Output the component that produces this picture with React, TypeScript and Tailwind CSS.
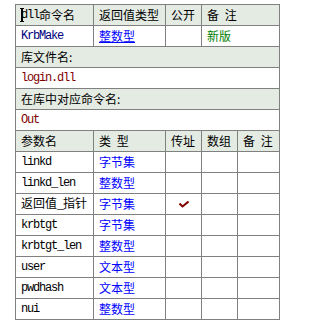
import React from "react";

const mono = "font-['Liberation_Mono',monospace] text-[12px] tracking-[-1.2px]";

type CellProps = {
  children?: React.ReactNode;
  head?: boolean;
  span?: string;
  className?: string;
};

function Cell({ children, head, span = "", className = "" }: CellProps) {
  return (
    <div
      className={`h-[21px] flex items-center pl-[5px] border-r border-b border-[#808080] whitespace-pre overflow-hidden ${
        head ? "bg-[#e4ebe3]" : "bg-white"
      } ${span} ${className}`}
    >
      {children}
    </div>
  );
}

function Check() {
  return (
    <svg width="10" height="7" viewBox="0 0 10 7" className="ml-[8px]">
      <path d="M0.5 2.5 L3.5 5.5 L9.5 0.5" fill="none" stroke="#800000" strokeWidth="2" />
    </svg>
  );
}

type Param = { name: string; type: string; byRef?: boolean };

const params: Param[] = [
  { name: "linkd", type: "字节集" },
  { name: "linkd_len", type: "整数型" },
  { name: "返回值_指针", type: "字节集", byRef: true },
  { name: "krbtgt", type: "字节集" },
  { name: "krbtgt_len", type: "整数型" },
  { name: "user", type: "文本型" },
  { name: "pwdhash", type: "文本型" },
  { name: "nui", type: "整数型" },
];

function isLatin(s: string) {
  return /^[\x00-\x7f]+$/.test(s);
}

export default function App() {
  return (
    <div className="w-[330px] h-[326px] bg-white font-['Noto_Sans_CJK_SC',sans-serif] text-[12px] text-black leading-[14px]">
      <div className="pt-[4px] pl-[15px]">
        <div className="relative w-[265px] grid grid-cols-[78px_72px_36px_36px_42px] border-l border-t border-[#808080]">
          <Cell head>
            <span className={mono}>dll</span>命令名
          </Cell>
          <Cell head>返回值类型</Cell>
          <Cell head>公开</Cell>
          <Cell head span="col-span-2">
            <span className="[word-spacing:3px]">备 注</span>
          </Cell>

          <Cell>
            <span className={`${mono} text-[#000080]`}>KrbMake</span>
          </Cell>
          <Cell>
            <span className="text-[#0000ff] underline underline-offset-[1px]">整数型</span>
          </Cell>
          <Cell />
          <Cell span="col-span-2">
            <span className="text-[#008000]">新版</span>
          </Cell>

          <Cell head span="col-span-5">库文件名:</Cell>
          <Cell span="col-span-5">
            <span className={`${mono} text-[#800000]`}>login.dll</span>
          </Cell>
          <Cell head span="col-span-5">在库中对应命令名:</Cell>
          <Cell span="col-span-5">
            <span className={`${mono} text-[#800000]`}>Out</span>
          </Cell>

          <Cell head>参数名</Cell>
          <Cell head>
            <span className="[word-spacing:3px]">类 型</span>
          </Cell>
          <Cell head>传址</Cell>
          <Cell head>数组</Cell>
          <Cell head>
            <span className="[word-spacing:3px]">备 注</span>
          </Cell>

          {params.map((p) => (
            <React.Fragment key={p.name}>
              <Cell>
                {isLatin(p.name) ? (
                  <span className={mono}>{p.name}</span>
                ) : (
                  <span>
                    返回值<span className={mono}>_</span>指针
                  </span>
                )}
              </Cell>
              <Cell>
                <span className="text-[#0000ff]">{p.type}</span>
              </Cell>
              <Cell>{p.byRef ? <Check /> : null}</Cell>
              <Cell />
              <Cell />
            </React.Fragment>
          ))}

          {/* text caret sitting in the first header cell */}
          <div className="absolute left-[5px] top-[3px] w-[2px] h-[14px] bg-black" />
          <div className="absolute left-[4px] top-[3px] w-[4px] h-[1px] bg-black" />
          <div className="absolute left-[4px] top-[16px] w-[4px] h-[1px] bg-black" />
        </div>
      </div>
    </div>
  );
}
